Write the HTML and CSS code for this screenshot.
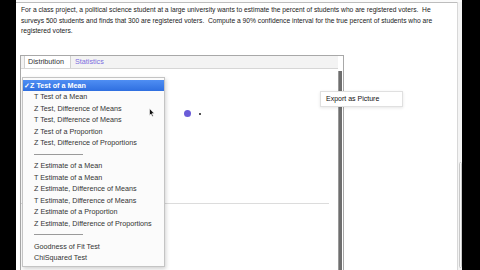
FILE: index.html
```html
<!DOCTYPE html>
<html>
<head>
<meta charset="utf-8">
<link rel="stylesheet" href="styles.css">
</head>
<body>
<div class="screen">
  <div class="edge"></div>
  <div class="page">
    <div class="content">
      <p class="question">For a class project, a political science student at a large university wants to estimate the percent of students who are registered voters.&nbsp; He<br>surveys 500 students and finds that 300 are registered voters.&nbsp; Compute a 90% confidence interval for the true percent of students who are<br>registered voters.</p>
      <div class="window">
        <div class="tabs">
          <span class="tab active">Distribution</span>
          <span class="tab link">Statistics</span>
        </div>
        <div class="pane">
          <div class="plot">
            <div class="plot-top"></div>
            <div class="plot-bottom"></div>
          </div>
          <div class="vscroll"></div>
        </div>
        <span class="dot"></span>
        <span class="mark"></span>
        <svg class="cursor" width="6" height="9" viewBox="0 0 6 9"><path d="M0.5 0.5 L0.5 7.5 L2 6 L3.3 8.5 L4.3 8 L3.1 5.6 L5.3 5.6 Z" fill="#111" stroke="#fff" stroke-width="0.6"/></svg>
        <ul class="menu">
          <li class="item selected"><span class="check">✓</span>Z Test of a Mean</li>
          <li class="item">T Test of a Mean</li>
          <li class="item">Z Test, Difference of Means</li>
          <li class="item">T Test, Difference of Means</li>
          <li class="item">Z Test of a Proportion</li>
          <li class="item">Z Test, Difference of Proportions</li>
          <li class="sep"><span></span></li>
          <li class="item">Z Estimate of a Mean</li>
          <li class="item">T Estimate of a Mean</li>
          <li class="item">Z Estimate, Difference of Means</li>
          <li class="item">T Estimate, Difference of Means</li>
          <li class="item">Z Estimate of a Proportion</li>
          <li class="item">Z Estimate, Difference of Proportions</li>
          <li class="sep"><span></span></li>
          <li class="item">Goodness of Fit Test</li>
          <li class="item">ChiSquared Test</li>
        </ul>
      </div>
      <div class="export">Export as Picture</div>
    </div>
    <div class="page-scroll"><div class="thumb"></div></div>
  </div>
</div>
</body>
</html>
```
FILE: styles.css
```css
html, body {
  margin: 0;
  padding: 0;
  background: #000;
  width: 480px;
  height: 270px;
  overflow: hidden;
}
.screen {
  display: flex;
  height: 270px;
}
.edge {
  width: 16px;
  flex: none;
}
.page {
  width: 446px;
  flex: none;
  background: #fff;
  display: flex;
  height: 270px;
  box-sizing: border-box;
  border-top: 2px solid #fafafa;
}
.content {
  flex: 1;
  position: relative;
  border-top: 1px solid #bdbdbd;
  overflow: hidden;
}
.question {
  margin: 2px 0 0 5px;
  font-family: "Liberation Sans", Arial, sans-serif;
  font-size: 6.7px;
  line-height: 10.5px;
  color: #222;
  white-space: nowrap;
}
.window {
  position: relative;
  margin: 18px 0 0 4px;
  width: 324px;
  height: 230px;
  box-sizing: border-box;
  border: 1px solid #a8a8a8;
  border-bottom: none;
  background: #fff;
  font-family: "Liberation Sans", Arial, sans-serif;
}
.tabs {
  display: flex;
  height: 12px;
  background: #f3f3f3;
  border-bottom: 1px solid #d6d6d6;
  padding-left: 3px;
  margin-right: 5px;
}
.tab {
  font-size: 7.2px;
  line-height: 12px;
  padding: 0 4px 0 3px;
  color: #333;
}
.tab.active {
  background: #fff;
  border-left: 1px solid #d0d0d0;
  border-right: 1px solid #d0d0d0;
  width: 38px;
}
.tab.link {
  color: #7c6ee0;
  padding-left: 4px;
}
.pane {
  display: flex;
  height: 220px;
}
.plot {
  flex: 1;
  display: flex;
  flex-direction: column;
}
.plot-top {
  height: 134px;
  border-bottom: 1px solid #dcdcdc;
  margin-right: 9px;
}
.vscroll {
  width: 4px;
  margin: 2px 1px 0 0;
  background: #6e6e6e;
  border-left: 1px solid #9a9a9a;
  box-sizing: border-box;
}
.dot {
  position: absolute;
  left: 163px;
  top: 54px;
  width: 7px;
  height: 7px;
  border-radius: 50%;
  background: #6a5cd8;
}
.mark {
  position: absolute;
  left: 178px;
  top: 57px;
  width: 2px;
  height: 2px;
  background: #555;
}
.cursor {
  position: absolute;
  left: 128px;
  top: 52px;
  z-index: 3;
}
.menu {
  position: absolute;
  left: 1px;
  top: 21px;
  width: 143px;
  height: 190px;
  margin: 0;
  padding: 2px 0 0;
  list-style: none;
  box-sizing: border-box;
  background: #fbfbfb;
  border: 1px solid #c4c4c4;
  box-shadow: 1px 2px 4px rgba(0,0,0,0.18);
  z-index: 2;
}
.item {
  height: 11.5px;
  line-height: 11.5px;
  font-size: 7.2px;
  color: #333;
  padding-left: 11px;
  white-space: nowrap;
}
.item.selected {
  background: linear-gradient(#4f8ef3, #2f6fe0);
  color: #fff;
  font-weight: bold;
  padding-left: 1px;
}
.check {
  display: inline-block;
  width: 6px;
  font-size: 6.5px;
}
.sep {
  height: 11.5px;
  display: flex;
  align-items: center;
  padding-left: 11px;
}
.sep span {
  display: block;
  width: 49px;
  height: 1px;
  background: #9a9a9a;
}
.export {
  position: absolute;
  left: 304px;
  top: 88px;
  width: 83px;
  height: 16px;
  box-sizing: border-box;
  border: 1px solid #e0e0e0;
  background: #fff;
  box-shadow: 0 1px 3px rgba(0,0,0,0.1);
  font-family: "Liberation Sans", Arial, sans-serif;
  font-size: 7px;
  line-height: 14px;
  padding-left: 5px;
  color: #111;
}
.page-scroll {
  width: 5px;
  flex: none;
  background: #f4f4f4;
  border-left: 1px solid #d8d8d8;
  box-sizing: border-box;
  position: relative;
}
.thumb {
  position: absolute;
  left: 1px;
  right: 0;
  top: 160px;
  bottom: 2px;
  border: 1px solid #c8c8c8;
  border-radius: 2px;
  background: #fafafa;
}
```
